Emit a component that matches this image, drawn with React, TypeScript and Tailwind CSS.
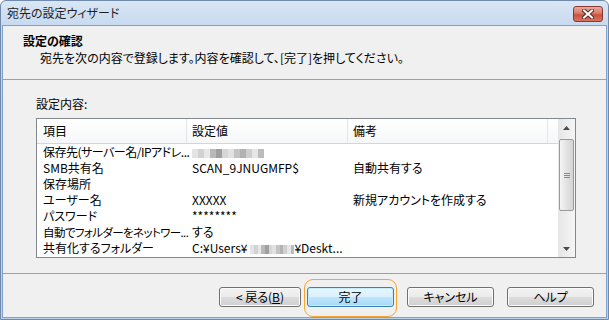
import type { ReactNode } from "react";

const jp = "font-['Noto_Sans_CJK_JP',sans-serif] [font-feature-settings:'palt'] text-[12px] leading-[16px] text-black";

const mosaic = ["#e4e4e4", "#d2d2d2", "#e8e8e8", "#b9b9b9", "#9f9f9f", "#d6d6d6", "#e2e2e2", "#c4c4c4", "#b2b2b2", "#cfcfcf", "#e6e6e6", "#bcbcbc"];

const Blur = ({ width }: { width: number }) => (
  <span className="inline-flex h-[9px] align-middle blur-[0.6px]" style={{ width }}>
    {mosaic.map((c, i) => (
      <span key={i} className="h-full flex-1" style={{ backgroundColor: c }} />
    ))}
  </span>
);

const Btn = ({ children, primary = false, w }: { children: ReactNode; primary?: boolean; w: string }) => (
  <div
    className={`${w} h-[20px] flex items-center justify-center rounded-[3px] border ${
      primary
        ? "border-[#3c7fb1] bg-[linear-gradient(#eaf6fd_0%,#d9f0fc_50%,#bee6fd_50%,#a7d9f5_100%)] shadow-[inset_0_0_0_1px_#c5ebfd]"
        : "border-[#707070] bg-[linear-gradient(#f2f2f2_0%,#ebebeb_50%,#dddddd_50%,#cfcfcf_100%)] shadow-[inset_0_0_0_1px_#fbfbfb]"
    }`}
  >
    {children}
  </div>
);

const Arrow = ({ up }: { up: boolean }) => (
  <svg width="7" height="4" viewBox="0 0 7 4">
    <polygon points={up ? "3.5,0 7,4 0,4" : "0,0 7,0 3.5,4"} fill="#4a4a4a" />
  </svg>
);

const rows: [ReactNode, ReactNode, ReactNode][] = [
  [<span className="tracking-[-0.5px]">保存先(サーバー名/IPアドレ...</span>, <Blur width={72} />, ""],
  ["SMB共有名", "SCAN_9JNUGMFP$", "自動共有する"],
  ["保存場所", "", ""],
  ["ユーザー名", "XXXXX", "新規アカウントを作成する"],
  ["パスワード", "********", ""],
  [<span className="text-[11.5px] tracking-[-0.6px]">自動でフォルダーをネットワー...</span>, "する", ""],
  [
    "共有化するフォルダー",
    <span className="flex items-center">
      C:¥Users¥
      <span className="ml-[3px]">
        <Blur width={44} />
      </span>
      ¥Deskt...
    </span>,
    "",
  ],
];

export default function App() {
  return (
    <div className={`relative w-[609px] h-[320px] bg-white ${jp}`}>
      <div className="flex h-full w-full flex-col rounded-t-[6px] border border-[#6f8aab] bg-[linear-gradient(#d9e6f5,#bcd2ec_40px,#b9cfea)]">
        {/* title bar */}
        <div className="flex h-[24px] shrink-0 items-center justify-between pl-[6px] pr-[5px]">
          <span className="text-[#1e1e1e]">宛先の設定ウィザード</span>
          <div className="mt-[2px] flex h-[16px] w-[30px] items-center justify-center rounded-[3px] border border-[#8a3a32] bg-[linear-gradient(#e8a99b_0%,#d77a69_45%,#c8533f_55%,#d9735f_100%)]">
            <svg width="12" height="10" viewBox="0 0 12 10">
              <path d="M2 1.5 L10 8.5 M10 1.5 L2 8.5" stroke="#5a2a24" strokeWidth="4" strokeLinecap="square" />
              <path d="M2 1.5 L10 8.5 M10 1.5 L2 8.5" stroke="#ffffff" strokeWidth="2" strokeLinecap="square" />
            </svg>
          </div>
        </div>

        {/* client area */}
        <div className="mx-[1px] mb-[1px] flex flex-1 flex-col border border-[#7fa3cc] bg-[#f0f0f0]">
          {/* header */}
          <div className="h-[54px] shrink-0 border-b border-[#a0a0a0] pl-[20px] pt-[7px]">
            <div className="font-bold">設定の確認</div>
            <div className="pl-[17px] pt-[1px]">宛先を次の内容で登録します。内容を確認して、[完了]を押してください。</div>
          </div>

          {/* body */}
          <div className="flex-1 pl-[33px] pr-[30px] pt-[16px]">
            <div>設定内容:</div>
            <div className="mt-[6px] flex h-[140px] border border-[#828790] bg-white">
              <div className="flex flex-1 flex-col">
                <div className="flex h-[25px] border-b border-[#d5d5d5] bg-[linear-gradient(#ffffff,#f6f7f8)]">
                  <div className="flex w-[150px] items-center border-r border-[#e3e5e8] pl-[6px]">項目</div>
                  <div className="flex w-[161px] items-center border-r border-[#e3e5e8] pl-[5px]">設定値</div>
                  <div className="flex w-[200px] items-center border-r border-[#e3e5e8] pl-[5px]">備考</div>
                </div>
                {rows.map((r, i) => (
                  <div key={i} className="flex h-[16px] items-center">
                    <div className="w-[150px] whitespace-nowrap pl-[6px]">{r[0]}</div>
                    <div className="w-[161px] whitespace-nowrap pl-[5px]">{r[1]}</div>
                    <div className="w-[200px] whitespace-nowrap pl-[5px]">{r[2]}</div>
                  </div>
                ))}
              </div>
              {/* scrollbar */}
              <div className="flex w-[17px] flex-col bg-[linear-gradient(90deg,#e6e6e6,#f5f5f5)]">
                <div className="flex h-[17px] items-center justify-center">
                  <Arrow up />
                </div>
                <div className="mx-[1px] mt-[3px] flex h-[72px] items-center justify-center rounded-[2px] border border-[#9a9a9a] bg-[linear-gradient(90deg,#f4f4f4,#e3e3e3_50%,#d4d4d4)]">
                  <div className="flex flex-col gap-[1px]">
                    <div className="h-px w-[6px] bg-[#8a8a8a]" />
                    <div className="h-px w-[6px] bg-[#8a8a8a]" />
                    <div className="h-px w-[6px] bg-[#8a8a8a]" />
                  </div>
                </div>
                <div className="flex-1" />
                <div className="flex h-[17px] items-center justify-center">
                  <Arrow up={false} />
                </div>
              </div>
            </div>
          </div>

          {/* buttons */}
          <div className="flex h-[44px] shrink-0 items-start justify-end border-t border-[#a0a0a0] pr-[12px] pt-[13px]">
            <Btn w="w-[82px]">&lt; 戻る(<span className="underline">B</span>)</Btn>
            <div className="w-[6px]" />
            <Btn w="w-[87px]" primary>完了</Btn>
            <div className="w-[13px]" />
            <Btn w="w-[87px]">キャンセル</Btn>
            <div className="w-[13px]" />
            <Btn w="w-[87px]">ヘルプ</Btn>
          </div>
        </div>
      </div>

      {/* highlight ring */}
      <div className="absolute left-[304px] top-[279px] h-[38px] w-[93px] rounded-[9px] border-[1.5px] border-[#f5a534]" />
    </div>
  );
}
